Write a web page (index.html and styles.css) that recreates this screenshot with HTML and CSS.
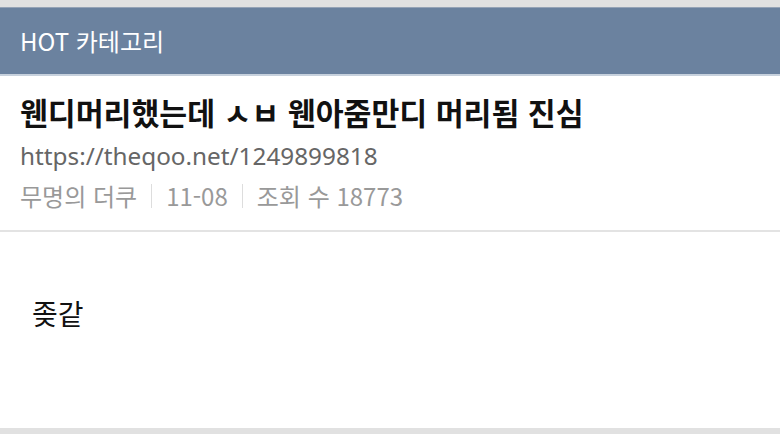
FILE: index.html
```html
<!DOCTYPE html>
<html lang="ko">
<head>
<meta charset="utf-8">
<link rel="stylesheet" href="styles.css">
</head>
<body>
<div class="page">
  <div class="topbar"></div>
  <div class="header"><span class="header-title">HOT 카테고리</span></div>
  <div class="post-head">
    <h1 class="title">웬디머리했는데 ㅅㅂ 웬아줌만디 머리됨 진심</h1>
    <div class="url">https://theqoo.net/1249899818</div>
    <div class="meta">
      <span>무명의 더쿠</span><span class="sep"></span><span>11-08</span><span class="sep"></span><span>조회 수 18773</span>
    </div>
  </div>
  <div class="content">좆같</div>
  <div class="bottombar"></div>
</div>
</body>
</html>
```

FILE: styles.css
```css
html, body { margin: 0; padding: 0; background: #fff; }
body { font-family: "Noto Sans CJK KR", "Noto Sans", sans-serif; width: 780px; height: 434px; overflow: hidden; }
.page { display: flex; flex-direction: column; height: 434px; }
.topbar { height: 7px; background: #e1e1e1; border-bottom: 1px solid #95a3b6; }
.header { height: 66px; background: #6b829f; border-bottom: 2px solid #c7d1dd; display: flex; align-items: center; padding-left: 20px; }
.header-title { color: #fff; font-size: 24px; line-height: 1; }
.post-head { padding: 15px 20px 0; border-bottom: 2px solid #e3e3e3; height: 156px; box-sizing: border-box; }
.title { margin: 0; font-size: 30.3px; font-weight: bold; color: #111; line-height: 42px; }
.url { font-size: 24.3px; color: #666; line-height: 45px; font-family: "Noto Sans", "Noto Sans CJK KR", sans-serif; }
.meta { font-size: 24px; color: #999; line-height: 36px; display: flex; align-items: center; }
.sep { width: 1px; height: 24px; background: #ddd; margin: 0 14px; }
.content { flex: 1; padding: 61px 32px 0; font-size: 28px; line-height: 40px; color: #111; }
.bottombar { height: 6px; background: #e1e1e1; }
```
